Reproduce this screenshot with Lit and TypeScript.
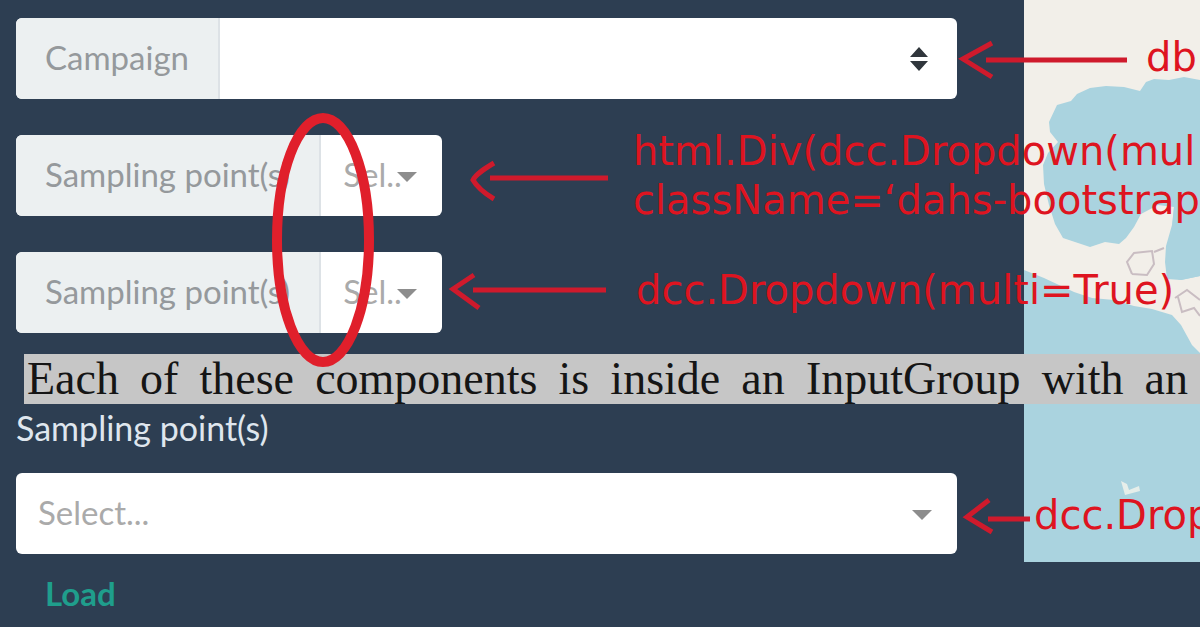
import { LitElement, html, css } from "lit";
import { customElement } from "lit/decorators.js";

@customElement("app-root")
export class AppRoot extends LitElement {
  static styles = css`
    :host {
      display: block;
      position: relative;
      overflow: hidden;
      min-height: 100vh;
      background: #2d3e52;
      font-family: Lato, "Open Sans", sans-serif;
      font-size: 33px;
      line-height: 40px;
    }
    * {
      box-sizing: border-box;
    }
    .layout {
      display: grid;
      grid-template-columns: 64fr 11fr;
      align-items: start;
    }
    .form {
      display: flex;
      flex-direction: column;
      align-items: flex-start;
      padding: 18px 67px 0 16px;
    }
    .group {
      display: flex;
      height: 81px;
      margin-bottom: 36px;
      border-radius: 6px;
      overflow: hidden;
      background: #fff;
    }
    .wide {
      width: 100%;
    }
    .addon {
      display: flex;
      align-items: center;
      padding: 0 29px 4px 29px;
      background: #ecf0f1;
      border-right: 2px solid #dde2e6;
      color: #95999c;
      white-space: nowrap;
    }
    .field {
      position: relative;
      display: flex;
      flex: 1;
    }
    .short {
      flex: none;
      width: 121px;
    }
    select {
      appearance: none;
      width: 100%;
      border: 0;
      padding: 0 22px 4px;
      background: transparent;
      color: #aaa;
      font: inherit;
    }
    .caret {
      position: absolute;
      right: 25px;
      top: 50%;
      width: 20px;
      height: 10px;
      margin-top: -4px;
    }
    .updown {
      position: absolute;
      right: 29px;
      top: 50%;
      width: 18px;
      height: 24px;
      margin-top: -12px;
    }
    .label {
      margin: 39px 0 25px;
      color: #dfe6ee;
      font-size: 34px;
    }
    .last {
      margin-bottom: 19px;
    }
    .load {
      border: 0;
      padding: 0 29px;
      background: none;
      color: #1f9e8c;
      font: inherit;
      font-weight: 700;
    }
    .map {
      display: block;
      width: 100%;
      height: 562px;
      background: #aad3df;
    }
    .marks {
      position: absolute;
      left: 0;
      top: 0;
      width: 1200px;
      height: 627px;
      pointer-events: none;
    }
    .note {
      position: absolute;
      color: #de1420;
      font-family: "DejaVu Sans", sans-serif;
      font-size: 40px;
      line-height: 49px;
      white-space: nowrap;
    }
    .n1 {
      left: 1146px;
      top: 33px;
    }
    .n2 {
      left: 633px;
      top: 127px;
    }
    .n3 {
      left: 636px;
      top: 266px;
    }
    .n4 {
      left: 1034px;
      top: 491px;
    }
    .banner {
      position: absolute;
      left: 24px;
      right: 0;
      top: 354px;
      margin: 0;
      padding: 0 12px 0 3px;
      background: #c6c6c6;
      color: #151515;
      font-family: "Liberation Serif", serif;
      font-size: 46px;
      line-height: 50px;
      text-align: justify;
      text-align-last: justify;
      white-space: nowrap;
    }
  `;

  private caret() {
    return html`<svg class="caret" viewBox="0 0 20 10" aria-hidden="true">
      <path d="M0 0H20L10 10Z" fill="#8d8d8d" />
    </svg>`;
  }

  private pointGroup(id: string) {
    return html`<div class="group">
      <label class="addon" for=${id}>Sampling point(s)</label>
      <div class="field short">
        <select id=${id}>
          <option>Sel..</option>
        </select>
        ${this.caret()}
      </div>
    </div>`;
  }

  render() {
    return html`
      <div class="layout">
        <form class="form">
          <div class="group wide">
            <label class="addon" for="campaign">Campaign</label>
            <div class="field">
              <select id="campaign">
                <option></option>
              </select>
              <svg class="updown" viewBox="0 0 18 24" aria-hidden="true">
                <path d="M0 10L9 0L18 10ZM0 14H18L9 24Z" fill="#30363c" />
              </svg>
            </div>
          </div>
          ${this.pointGroup("points-a")} ${this.pointGroup("points-b")}
          <label class="label" for="points-c">Sampling point(s)</label>
          <div class="group wide last">
            <div class="field">
              <select id="points-c">
                <option>Select...</option>
              </select>
              ${this.caret()}
            </div>
          </div>
          <button class="load" type="button">Load</button>
        </form>
        <svg class="map" viewBox="0 0 176 562" preserveAspectRatio="xMinYMin slice" aria-hidden="true">
          <path
            d="M0 0H176V80L160 77L145 80L130 79L122 82L116 91L100 87L82 86L66 88L53 94L47 101L33 105L25 122L26 132L34 142L24 153L19 165L20 184L25 205L31 224L39 238L54 243L66 247L81 242L95 244L102 238L110 227L117 214L134 205L150 207L148 225L142 246L141 262L143 279L157 280L176 276V353L168 345L157 325L148 315L128 309L110 306L90 300L68 298L50 292L20 278L0 270Z"
            fill="#f2efe9"
          />
          <path d="M150 207L176 201V276L157 280L143 276L142 262L143 246L148 230Z" fill="#aad3df" />
          <path
            d="M108 274L103 262L110 253L128 251L130 264L123 275L108 274M130 252L140 248M151 298L163 290L176 300M154 297L158 312L170 308L176 316"
            fill="none"
            stroke="#c9bdc2"
            stroke-width="2"
          />
          <path d="M97 481L103 484L105 490L115 486L116 491L101 495Z" fill="#e6eeea" />
        </svg>
      </div>

      <p class="banner">Each of these components is inside an InputGroup with an</p>

      <div class="note n1">db</div>
      <div class="note n2">html.Div(dcc.Dropdown(mul<br />className=‘dahs-bootstrap</div>
      <div class="note n3">dcc.Dropdown(multi=True)</div>
      <div class="note n4">dcc.Drop</div>

      <svg class="marks" viewBox="0 0 1200 627" aria-hidden="true">
        <g fill="none" stroke="#cf1a2c" stroke-width="5">
          <path d="M1127 60H986M992 43L963 59L992 77" />
          <path d="M608 178H490M494 163C484 169 476 174 473 180C477 187 484 193 494 199" />
          <path d="M606 290H473M474 275L453 289L479 308" />
          <path d="M1030 519H988M989 500L967 517L992 532" />
        </g>
        <ellipse cx="323" cy="240" rx="46" ry="122" fill="none" stroke="#e01f2b" stroke-width="10" />
      </svg>
    `;
  }
}
